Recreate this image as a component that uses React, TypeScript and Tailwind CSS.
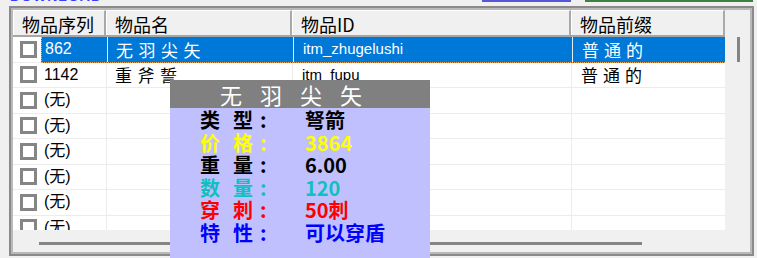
const rows = [
  { id: '862', name: '无羽尖矢', key: 'itm_zhugelushi', prefix: '普通的', selected: true },
  { id: '1142', name: '重斧誓', key: 'itm_fupu', prefix: '普通的', selected: false },
  { id: '(无)', name: '', key: '', prefix: '', selected: false },
  { id: '(无)', name: '', key: '', prefix: '', selected: false },
  { id: '(无)', name: '', key: '', prefix: '', selected: false },
  { id: '(无)', name: '', key: '', prefix: '', selected: false },
  { id: '(无)', name: '', key: '', prefix: '', selected: false },
  { id: '(无)', name: '', key: '', prefix: '', selected: false },
];

const stats = [
  { a: '类', b: '型', value: '弩箭', color: 'text-black' },
  { a: '价', b: '格', value: '3864', color: 'text-[#ffff00]' },
  { a: '重', b: '量', value: '6.00', color: 'text-black' },
  { a: '数', b: '量', value: '120', color: 'text-[#10c0c0]' },
  { a: '穿', b: '刺', value: '50刺', color: 'text-[#ff0000]' },
  { a: '特', b: '性', value: '可以穿盾', color: 'text-[#0000ff]' },
];

const cjk = "font-['Noto_Sans_CJK_SC',sans-serif]";
const latin = "font-['Liberation_Sans','Noto_Sans_CJK_SC',sans-serif]";

function HeaderCell({ label, width }: { label: string; width: string }) {
  return (
    <div className={`${width} h-full shrink-0 border-t border-l border-white border-r-2 border-r-[#a9a9a9] bg-[#f0f0f0] pl-[8px] pt-[1px] text-[18px] leading-[24px] text-black ${cjk}`}>
      {label}
    </div>
  );
}

function Row({ row }: { row: (typeof rows)[number] }) {
  const sel = row.selected;
  return (
    <div className="flex h-[25.5px] shrink-0 border-b border-[#ececec]">
      <div className="flex w-[28px] shrink-0 items-center pl-[7px]">
        <div className="h-[17px] w-[17px] border-[3px] border-[#858585] bg-white" />
      </div>
      <div
        className={`flex flex-1 items-stretch ${
          sel ? 'bg-[#0078d7] text-white border-l border-b border-dotted border-[#f2a65a] -mb-px' : 'text-black'
        }`}
      >
        <div className={`flex w-[65px] shrink-0 items-center pl-[3px] text-[16px] ${latin}`}>{row.id}</div>
        <div className={`flex w-[186px] shrink-0 items-center border-l border-[#ececec] pl-[8px] text-[17px] tracking-[5.5px] ${cjk}`}>
          {row.name}
        </div>
        <div className={`flex w-[279px] shrink-0 items-center border-l border-[#ececec] pl-[9px] text-[15px] ${latin}`}>
          {row.key}
        </div>
        <div className={`flex flex-1 items-center border-l border-[#ececec] pl-[9px] text-[17px] tracking-[5px] ${cjk}`}>
          {row.prefix}
        </div>
      </div>
    </div>
  );
}

export default function App() {
  return (
    <div className="relative h-[258px] w-[757px] overflow-hidden bg-[#f0f0f0]">
      {/* top strip, mostly scrolled off */}
      <div className="flex h-[6px]">
        <div className="ml-[10px] h-[4px] w-[472px] overflow-hidden">
          <div className={`-mt-[11px] text-[14px] font-bold leading-[14px] tracking-[1px] text-[#3c3cff] ${latin}`}>DOWNLOAD</div>
        </div>
        <div className="h-[2px] w-[89px] border-b-2 border-[#5656d8]" />
        <div className="ml-[14px] h-[2px] w-[168px] border-b-2 border-[#3f7f3f]" />
      </div>

      {/* list view frame */}
      <div className="ml-[9px] h-[250px] w-[745px] border-2 border-[#8a8a8a]">
        <div className="flex h-full border-2 border-[#b9b9b9]">
          <div className="flex w-[712px] shrink-0 flex-col">
            <div className="flex h-[27px] shrink-0 border-b-2 border-[#a6a6a6]">
              <HeaderCell label="物品序列" width="w-[93px]" />
              <HeaderCell label="物品名" width="w-[186px]" />
              <HeaderCell label="物品ID" width="w-[279px]" />
              <HeaderCell label="物品前缀" width="w-[154px]" />
            </div>
            <div className="flex h-[193px] shrink-0 flex-col overflow-hidden bg-white">
              {rows.map((r, i) => (
                <Row key={i} row={r} />
              ))}
            </div>
            <div className="flex-1 pl-[26px] pt-[12px]">
              <div className="h-[3px] w-[603px] bg-[#858585]" />
            </div>
          </div>
          <div className="flex-1 pl-[12px] pt-[27px]">
            <div className="h-[25px] w-[3px] bg-[#858585]" />
          </div>
        </div>
      </div>

      {/* item tooltip */}
      <div className="absolute left-[170px] top-[80px] w-[260px] h-[190px] bg-[#c0c0ff]">
        <div className={`flex h-[28px] items-center justify-center bg-[#808080] pl-[0px] text-[22px] leading-[28px] tracking-[18px] text-white ${cjk}`}>
          无羽尖矢
        </div>
        <div className={`pl-[30px] pt-[1px] text-[20px] font-bold leading-[22.5px] ${cjk}`}>
          {stats.map((s) => (
            <div key={s.a} className={`flex ${s.color}`}>
              <span className="w-[33px]">{s.a}</span>
              <span className="w-[27px]">{s.b}</span>
              <span className="w-[45px]">:</span>
              <span>{s.value}</span>
            </div>
          ))}
        </div>
      </div>
    </div>
  );
}
